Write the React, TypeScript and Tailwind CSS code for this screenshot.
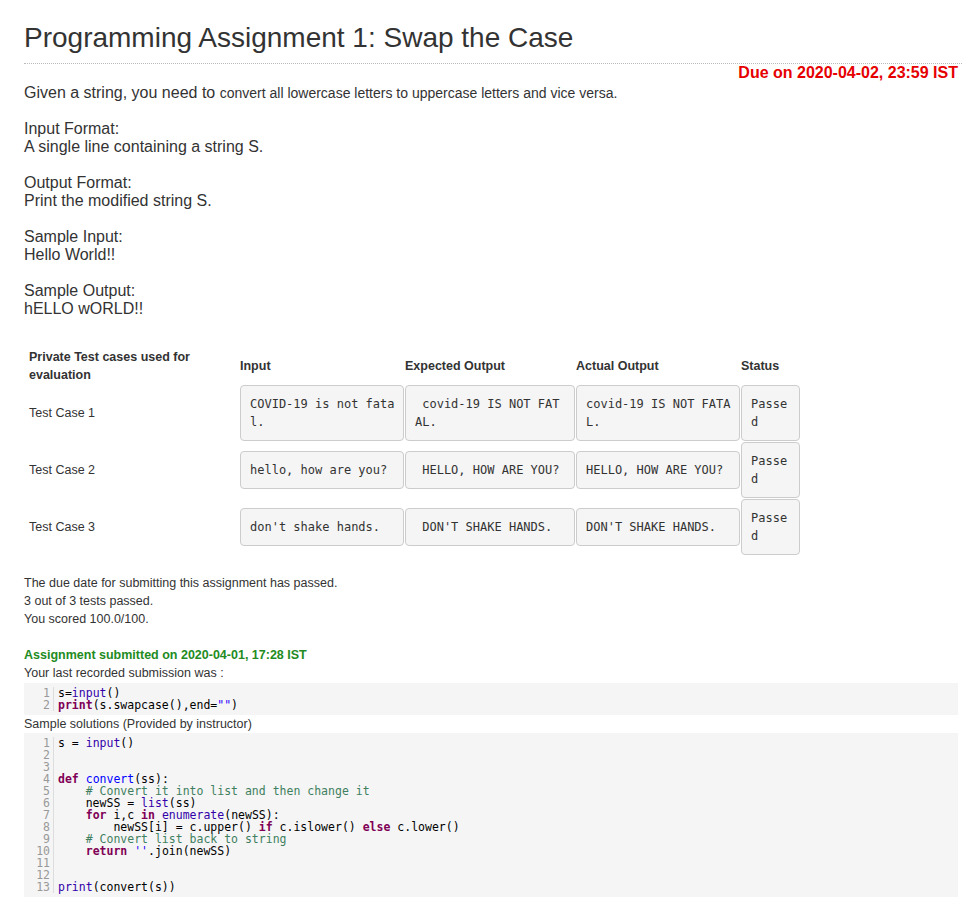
import React from "react";

type Tok = [string, string?];

const K = "text-[#7f0055] font-bold";
const B = "text-[#3300aa]";
const D = "text-[#0000ff]";
const C = "text-[#3f7f5f]";
const S = "text-[#2a00ff]";

const block1: Tok[][] = [
  [["s="], ["input", B], ["()"]],
  [["print", K], ["(s.swapcase(),end="], ['""', S], [")"]],
];

const block2: Tok[][] = [
  [["s = "], ["input", B], ["()"]],
  [],
  [],
  [["def", K], [" "], ["convert", D], ["(ss):"]],
  [["    "], ["# Convert it into list and then change it", C]],
  [["    newSS = "], ["list", B], ["(ss)"]],
  [["    "], ["for", K], [" i,c "], ["in", K], [" "], ["enumerate", B], ["(newSS):"]],
  [["        newSS[i] = c.upper() "], ["if", K], [" c.islower() "], ["else", K], [" c.lower()"]],
  [["    "], ["# Convert list back to string", C]],
  [["    "], ["return", K], [" "], ["''", S], [".join(newSS)"]],
  [],
  [],
  [["print", B], ["(convert(s))"]],
];

function CodeBlock({ lines }: { lines: Tok[][] }) {
  return (
    <div className="bg-[#f5f5f5] py-1 flex font-['DejaVu_Sans_Mono',monospace] text-[11.5px] leading-[12px] text-black">
      <div className="w-[30px] shrink-0 border-r border-[#dddddd] pr-[3px] text-right text-[#999999]">
        {lines.map((_, i) => (
          <div key={i} className="h-[12px]">
            {i + 1}
          </div>
        ))}
      </div>
      <div className="pl-[4px] whitespace-pre">
        {lines.map((l, i) => (
          <div key={i} className="h-[12px]">
            {l.map((t, j) => (
              <span key={j} className={t[1] ?? ""}>
                {t[0]}
              </span>
            ))}
          </div>
        ))}
      </div>
    </div>
  );
}

function Box({ lines }: { lines: string[] }) {
  return (
    <div className="rounded-[4px] border border-[#cccccc] bg-[#f5f5f5] px-[9px] py-[9px] font-['DejaVu_Sans_Mono',monospace] text-[12px] leading-[18px] text-[#333] whitespace-pre">
      {lines.map((l, i) => (
        <div key={i}>{l}</div>
      ))}
    </div>
  );
}

const rows: { label: string; cells: string[][]; status: string[] }[] = [
  {
    label: "Test Case 1",
    cells: [
      ["COVID-19 is not fata", "l."],
      [" covid-19 IS NOT FAT", "AL."],
      ["covid-19 IS NOT FATA", "L."],
    ],
    status: ["Passe", "d"],
  },
  {
    label: "Test Case 2",
    cells: [["hello, how are you?"], [" HELLO, HOW ARE YOU?"], ["HELLO, HOW ARE YOU?"]],
    status: ["Passe", "d"],
  },
  {
    label: "Test Case 3",
    cells: [["don't shake hands."], [" DON'T SHAKE HANDS."], ["DON'T SHAKE HANDS."]],
    status: ["Passe", "d"],
  },
];

export default function App() {
  return (
    <div className="min-h-screen bg-white pl-6 font-['Liberation_Sans',Arial,sans-serif] text-[#333]">
      <h1 className="mt-[20px] border-b border-dotted border-[#bbbbbb] pb-[7px] text-[28px] font-normal leading-[36px] text-[#333]">
        Programming Assignment 1: Swap the Case
      </h1>
      <div className="pr-1">
        <div className="text-right text-[16px] font-bold leading-[18px] text-[#e60000]">
          Due on 2020-04-02, 23:59 IST
        </div>
        <div className="mt-[2px] text-[16px] leading-[18px]">
          <p>
            Given a string, you need to{" "}
            <span className="text-[14px]">convert all lowercase letters to uppercase letters and vice versa.</span>
          </p>
          <div className="mt-[18px]">
            <p>Input Format:</p>
            <p>A single line containing a string S.</p>
          </div>
          <div className="mt-[18px]">
            <p>Output Format:</p>
            <p>Print the modified string S.</p>
          </div>
          <div className="mt-[18px]">
            <p>Sample Input:</p>
            <p>Hello World!!</p>
          </div>
          <div className="mt-[18px]">
            <p>Sample Output:</p>
            <p>hELLO wORLD!!</p>
          </div>
        </div>

        <div className="mt-[30px] grid grid-cols-[215px_164px_170px_164px_59px] items-center gap-x-[1px] gap-y-[1px] text-[12.5px] leading-[18px]">
          <div className="pl-[5px] font-bold">
            Private Test cases used for
            <br />
            evaluation
          </div>
          <div className="font-bold">Input</div>
          <div className="font-bold">Expected Output</div>
          <div className="font-bold">Actual Output</div>
          <div className="font-bold">Status</div>
          {rows.map((r) => (
            <React.Fragment key={r.label}>
              <div className="pl-[5px]">{r.label}</div>
              {r.cells.map((c, i) => (
                <Box key={i} lines={c} />
              ))}
              <Box lines={r.status} />
            </React.Fragment>
          ))}
        </div>

        <div className="mt-[19px] text-[12.5px] leading-[18px]">
          <p>The due date for submitting this assignment has passed.</p>
          <p>3 out of 3 tests passed.</p>
          <p>You scored 100.0/100.</p>
        </div>

        <div className="mt-[18px] text-[12.5px] leading-[18px]">
          <p className="font-bold text-[#228b22]">Assignment submitted on 2020-04-01, 17:28 IST</p>
          <p>Your last recorded submission was :</p>
        </div>
        <div className="mt-[1px]">
          <CodeBlock lines={block1} />
        </div>
        <p className="text-[12.5px] leading-[18px]">Sample solutions (Provided by instructor)</p>
        <CodeBlock lines={block2} />
      </div>
    </div>
  );
}
